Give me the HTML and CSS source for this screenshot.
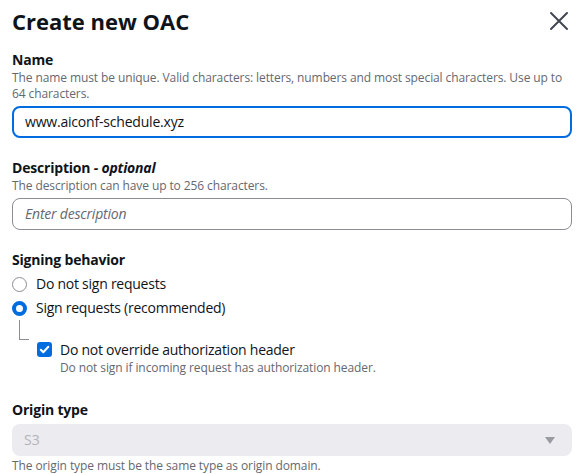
FILE: index.html
```html
<!DOCTYPE html>
<html>
<head>
<meta charset="utf-8">
<link rel="stylesheet" href="styles.css">
</head>
<body>
<div class="modal">
  <div class="header">
    <h2 class="title">Create new OAC</h2>
    <button class="close" aria-label="Close">
      <svg width="20" height="20" viewBox="0 0 20 20"><path d="M2 2l16 16M18 2L2 18" stroke="#424650" stroke-width="2" fill="none" stroke-linecap="round"/></svg>
    </button>
  </div>

  <div class="field first">
    <div class="label">Name</div>
    <div class="desc">The name must be unique. Valid characters: letters, numbers and most special characters. Use up to 64 characters.</div>
    <div class="input focused">www.aiconf-schedule.xyz</div>
  </div>

  <div class="field">
    <div class="label">Description <span class="opt">- optional</span></div>
    <div class="desc">The description can have up to 256 characters.</div>
    <div class="input placeholder">Enter description</div>
  </div>

  <div class="field">
    <div class="label">Signing behavior</div>
    <div class="radios">
      <div class="radio"><span class="dot"></span>Do not sign requests</div>
      <div class="radio"><span class="dot on"></span>Sign requests (recommended)</div>
    </div>
    <div class="tree">
      <span class="branch"></span>
      <div class="check">
        <span class="box"><svg width="15" height="15" viewBox="0 0 15 15"><path d="M3.8 7.7l2.5 2.5 5-5.4" stroke="#fff" stroke-width="2" fill="none" stroke-linecap="round" stroke-linejoin="round"/></svg></span>
        <div>
          <div class="ctext">Do not override authorization header</div>
          <div class="desc">Do not sign if incoming request has authorization header.</div>
        </div>
      </div>
    </div>
  </div>

  <div class="field origin">
    <div class="label">Origin type</div>
    <div class="select">S3<span class="caret"></span></div>
    <div class="desc after">The origin type must be the same type as origin domain.</div>
  </div>
</div>
</body>
</html>
```

FILE: styles.css
```css
* { box-sizing: border-box; }
body {
  margin: 0;
  background: #fff;
  font-family: "Open Sans", "Noto Sans", sans-serif;
  color: #0f141a;
}
.modal {
  padding: 8px 11px 0 12px;
}
.header {
  display: flex;
  justify-content: space-between;
  align-items: center;
  height: 26px;
}
.title {
  margin: 0;
  font-size: 22px;
  font-weight: 700;
  line-height: 26px;
}
.close {
  border: 0;
  background: none;
  padding: 0;
  margin-right: 3px;
  display: flex;
}
.field { margin-top: 20px; }
.field.first { margin-top: 16px; }
.label {
  font-size: 14px;
  font-weight: 700;
  line-height: 20px;
  letter-spacing: -0.2px;
}
.opt { font-style: italic; }
.desc {
  font-size: 12px;
  line-height: 16px;
  color: #656871;
  letter-spacing: -0.1px;
}
.input {
  margin-top: 4px;
  height: 32px;
  border: 1px solid #8c8c94;
  border-radius: 8px;
  padding: 0 12px;
  font-size: 14px;
  line-height: 30px;
  letter-spacing: -0.2px;
}
.input.focused {
  border: 2px solid #006ce0;
  padding: 0 11px;
  line-height: 28px;
}
.placeholder { font-style: italic; color: #656871; }
.radios { margin-top: 2px; }
.radio {
  display: flex;
  align-items: center;
  font-size: 14px;
  line-height: 24px;
  letter-spacing: -0.25px;
}
.dot {
  width: 15px;
  height: 15px;
  border-radius: 50%;
  border: 1.5px solid #8c8c94;
  margin-right: 9px;
  flex: none;
}
.dot.on {
  border: 4.5px solid #006ce0;
  background: #fff;
}
.tree {
  display: flex;
  margin-left: 7px;
}
.branch {
  width: 10px;
  height: 20px;
  border-left: 1px solid #8c8c94;
  border-bottom: 1px solid #8c8c94;
  flex: none;
}
.check {
  display: flex;
  margin-left: 8px;
  margin-top: 20px;
}
.box {
  width: 15px;
  height: 15px;
  border-radius: 3px;
  background: #006ce0;
  margin-top: 2px;
  margin-right: 8px;
  flex: none;
  display: flex;
}
.ctext {
  font-size: 14px;
  line-height: 20px;
  letter-spacing: -0.25px;
}
.origin { margin-top: 24px; }
.select {
  margin-top: 4px;
  height: 32px;
  background: #ebebf0;
  border-radius: 8px;
  color: #b4b4bb;
  font-size: 14px;
  line-height: 32px;
  padding: 0 12px;
  display: flex;
  justify-content: space-between;
  align-items: center;
}
.caret {
  width: 0;
  height: 0;
  border-left: 5px solid transparent;
  border-right: 5px solid transparent;
  border-top: 7px solid #9a9aa2;
  margin-right: 5px;
}
.after { margin-top: 2px; }
```
